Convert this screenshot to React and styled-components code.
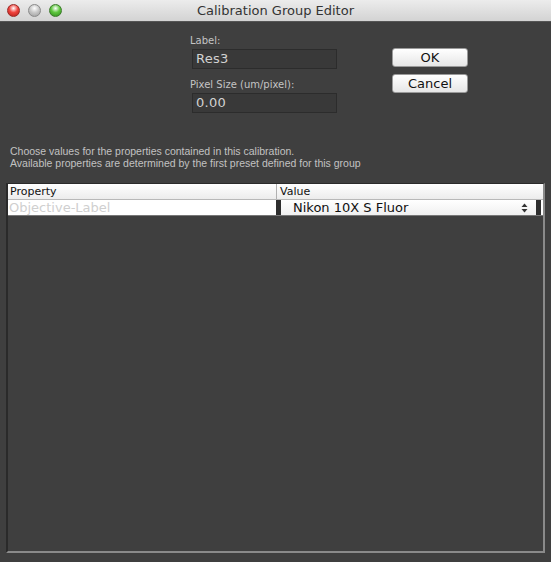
import React from "react";
import styled, { createGlobalStyle } from "styled-components";

const GlobalStyle = createGlobalStyle`
  html, body {
    margin: 0;
    padding: 0;
    background: #3f3f3f;
  }
  * { box-sizing: border-box; }
`;

const Window = styled.div`
  width: 551px;
  height: 562px;
  background: #3f3f3f;
  display: flex;
  flex-direction: column;
  font-family: "DejaVu Sans", "Liberation Sans", sans-serif;
  overflow: hidden;
`;

const TitleBar = styled.div`
  height: 22px;
  flex: none;
  display: flex;
  align-items: center;
  position: relative;
  background: linear-gradient(#ececec, #d3d3d3);
  border-bottom: 1px solid #555;
`;

const Lights = styled.div`
  display: flex;
  gap: 8px;
  padding-left: 7px;
`;

const Light = styled.span`
  width: 13px;
  height: 13px;
  border-radius: 50%;
  border: 1px solid ${(p) => p.$edge};
  background: radial-gradient(circle at 50% 30%, #fff 0, ${(p) => p.$color} 45%, ${(p) => p.$dark} 100%);
`;

const Title = styled.div`
  position: absolute;
  left: 0;
  right: 0;
  text-align: center;
  font-size: 13px;
  color: #333;
  pointer-events: none;
`;

const Top = styled.div`
  display: flex;
  padding: 13px 0 0 190px;
  height: 123px;
  flex: none;
`;

const Fields = styled.div`
  display: flex;
  flex-direction: column;
  width: 147px;
`;

const FieldLabel = styled.div`
  font-size: 10px;
  color: #c4c4c4;
  margin-bottom: 3px;
  margin-top: ${(p) => (p.$first ? 0 : "10px")};
`;

const Input = styled.div`
  margin-left: 2px;
  width: 145px;
  height: 20px;
  background: #393939;
  border: 1px solid #2c2c2c;
  color: #d2d2d2;
  font-size: 13px;
  line-height: 18px;
  padding-left: 3px;
  letter-spacing: 0.3px;
`;

const Buttons = styled.div`
  display: flex;
  flex-direction: column;
  gap: 7px;
  margin-left: 55px;
  padding-top: 13px;
`;

const Button = styled.div`
  width: 76px;
  height: 19px;
  border-radius: 3px;
  background: linear-gradient(#ffffff, #e6e6e6);
  border: 1px solid #9a9a9a;
  color: #111;
  font-family: "DejaVu Sans", sans-serif;
  font-size: 13px;
  line-height: 17px;
  text-align: center;
`;

const Notes = styled.div`
  padding: 0 0 0 10px;
  font-family: "Liberation Sans", Arial, sans-serif;
  font-size: 10.5px;
  line-height: 12px;
  color: #c2c2c2;
  height: 38px;
  flex: none;
`;

const Table = styled.div`
  margin: 0 6px 0 6px;
  height: 370px;
  border-left: 2px solid #2a2a2a;
  border-top: 1px solid #2a2a2a;
  border-right: 2px solid #8a8a8a;
  border-bottom: 2px solid #8a8a8a;
  display: flex;
  flex-direction: column;
`;

const Header = styled.div`
  display: grid;
  grid-template-columns: 268px 1fr;
  height: 16px;
  background: linear-gradient(#ffffff, #ececec);
  border-bottom: 1px solid #b8b8b8;
  font-size: 11px;
  color: #111;
`;

const HeadCell = styled.div`
  padding-left: ${(p) => (p.$value ? "3px" : "2px")};
  line-height: 15px;
  border-left: ${(p) => (p.$value ? "1px solid #b0b0b0" : "none")};
`;

const Row = styled.div`
  display: grid;
  grid-template-columns: 268px 1fr;
  height: 16px;
  background: #fff;
  border-bottom: 1px solid #777;
`;

const PropCell = styled.div`
  color: #cfcfcf;
  font-size: 13px;
  line-height: 15px;
  padding-left: 1px;
  overflow: hidden;
  white-space: nowrap;
`;

const ValueCell = styled.div`
  display: flex;
  border-left: 5px solid #2e2e2e;
  border-right: 5px solid #2e2e2e;
  margin-right: 2px;
`;

const Combo = styled.div`
  flex: 1;
  display: flex;
  align-items: center;
  justify-content: space-between;
  background: linear-gradient(#ffffff, #f0f0f0);
  padding: 0 8px 0 12px;
  font-size: 13px;
  color: #111;
`;

const Arrows = () => (
  <svg width="7" height="10" viewBox="0 0 7 10">
    <path d="M3.5 0.5 L6.5 4 L0.5 4 Z" fill="#333" />
    <path d="M3.5 9.5 L6.5 6 L0.5 6 Z" fill="#333" />
  </svg>
);

export default function App() {
  return (
    <>
      <GlobalStyle />
      <Window>
        <TitleBar>
          <Lights>
            <Light $color="#f0453f" $dark="#b41d18" $edge="#9a2a26" />
            <Light $color="#c9c9c9" $dark="#9b9b9b" $edge="#8a8a8a" />
            <Light $color="#5fc73f" $dark="#2f8a1c" $edge="#3b7a2a" />
          </Lights>
          <Title>Calibration Group Editor</Title>
        </TitleBar>
        <Top>
          <Fields>
            <FieldLabel $first>Label:</FieldLabel>
            <Input>Res3</Input>
            <FieldLabel>Pixel Size (um/pixel):</FieldLabel>
            <Input>0.00</Input>
          </Fields>
          <Buttons>
            <Button>OK</Button>
            <Button>Cancel</Button>
          </Buttons>
        </Top>
        <Notes>
          Choose values for the properties contained in this calibration.
          <br />
          Available properties are determined by the first preset defined for this group
        </Notes>
        <Table>
          <Header>
            <HeadCell>Property</HeadCell>
            <HeadCell $value>Value</HeadCell>
          </Header>
          <Row>
            <PropCell>Objective-Label</PropCell>
            <ValueCell>
              <Combo>
                Nikon 10X S Fluor
                <Arrows />
              </Combo>
            </ValueCell>
          </Row>
        </Table>
      </Window>
    </>
  );
}
